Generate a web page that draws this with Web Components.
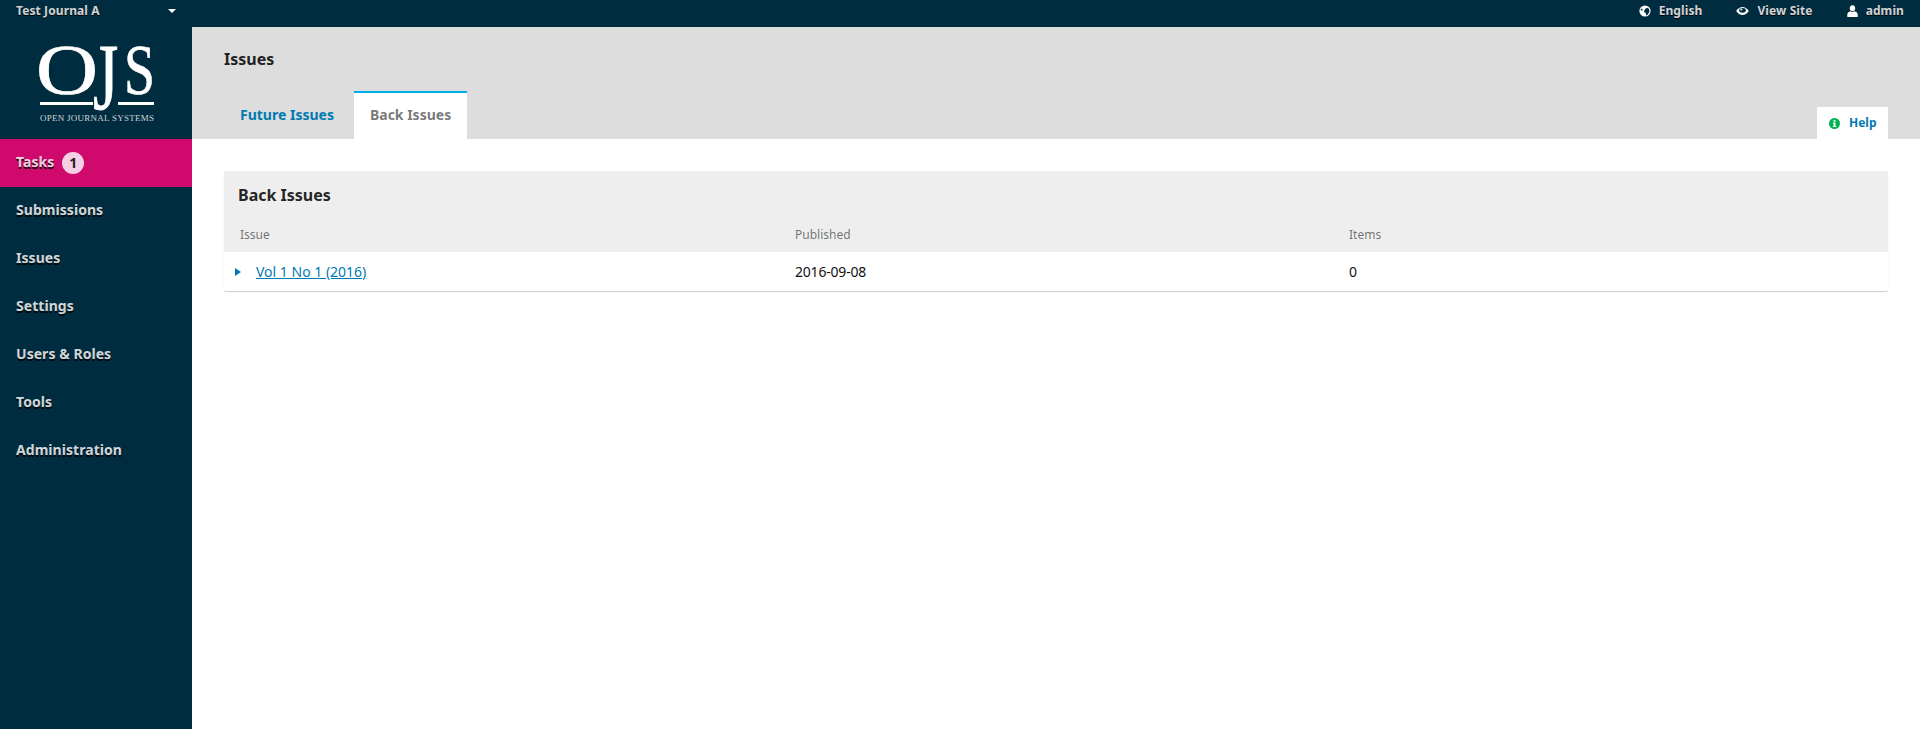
<!DOCTYPE html>
<html lang="en">
<head>
<meta charset="utf-8">
<title>Issues</title>
<style>
html, body { margin: 0; height: 100%; background: #fff; overflow: hidden; font-family: "Noto Sans", sans-serif; }
</style>
</head>
<body>
<ojs-app></ojs-app>
<template id="app-tpl">
<style>
:host { display: flex; flex-direction: column; height: 729px; }
.body { display: flex; flex: 1; min-height: 0; }
main { flex: 1; min-width: 0; }
</style>
<ojs-topbar></ojs-topbar>
<div class="body">
  <ojs-sidebar></ojs-sidebar>
  <main>
    <ojs-page-head></ojs-page-head>
    <ojs-issue-card></ojs-issue-card>
  </main>
</div>
</template>

<script>
const icons = {
  globe: `<svg width="12" height="12" viewBox="0 0 12 12"><circle cx="6" cy="6" r="5.6" fill="#fff"/><path d="M6.600 3.400 8.800 2.800 10.200 4.600 10.400 7 8.600 9.800 7.200 10.400 6.800 8 5 7 5.400 5.200Z" fill="#002c40"/><path d="M1.400 4.200 3 3.600 3.800 5 2.800 5.800Z" fill="#002c40"/></svg>`,
  eye: `<svg width="13" height="10" viewBox="0 0 13 10"><path d="M.2 5C2 2.200 4.200 1 6.500 1s4.500 1.200 6.300 4C11 7.800 8.800 9 6.500 9S2 7.800.2 5Z" fill="#fff"/><ellipse cx="6.500" cy="4.300" rx="3.400" ry="2.400" fill="#002c40"/><circle cx="5.300" cy="3.600" r="1" fill="#fff"/></svg>`,
  user: `<svg width="11" height="12" viewBox="0 0 11 12"><ellipse cx="5.500" cy="3.200" rx="2.700" ry="3" fill="#fff"/><path d="M.3 12V9.300C.3 7.700 2 6.800 3.500 6.300 4.800 7.200 6.200 7.200 7.500 6.300 9 6.800 10.700 7.700 10.700 9.300V12Z" fill="#fff"/></svg>`,
  info: `<svg width="11" height="11" viewBox="0 0 11 11"><circle cx="5.500" cy="5.500" r="5.500" fill="#00b24e"/><rect x="4.500" y="2" width="2" height="1.800" fill="#fff"/><path d="M3.900 4.500H6.500V8H7.300V9H3.900V8H4.600V5.500H3.900Z" fill="#fff"/></svg>`
}

class OjsApp extends HTMLElement {
  constructor() {
    super()
    this.attachShadow({ mode: "open" })
    this.shadowRoot.append(document.getElementById("app-tpl").content.cloneNode(true))
  }
}

class OjsTopbar extends HTMLElement {
  constructor() {
    super()
    this.attachShadow({ mode: "open" }).innerHTML = `
<style>
:host { display: flex; align-items: center; justify-content: space-between; height: 27px; background: #002c40; color: rgba(255,255,255,.84); font: 700 12px/20px "Noto Sans", sans-serif; letter-spacing: .1px; text-shadow: 0 1px 0 #000; padding: 0 16px; }
.journal { display: flex; align-items: center; width: 160px; justify-content: space-between; margin-top: -6px; }
.caret { width: 0; height: 0; border: 4px solid transparent; border-top: 4px solid #fff; border-bottom: 0; }
nav { display: flex; gap: 34px; margin-top: -5px; }
nav span { display: flex; align-items: center; gap: 8px; }
svg { display: block; }
</style>
<div class="journal"><span>Test Journal A</span><i class="caret"></i></div>
<nav>
  <span>${icons.globe}English</span>
  <span>${icons.eye}View Site</span>
  <span>${icons.user}admin</span>
</nav>`
  }
}

class OjsLogo extends HTMLElement {
  constructor() {
    super()
    this.attachShadow({ mode: "open" }).innerHTML = `
<style>
:host { display: block; height: 112px; }
svg { display: block; overflow: visible; }
text { font-family: "Liberation Serif", serif; fill: #fff; }
.big { stroke: #fff; stroke-width: .7px; }
</style>
<svg width="192" height="112" viewBox="0 0 192 112">
  <text class="big" x="36" y="67" font-size="72" textLength="62" lengthAdjust="spacingAndGlyphs">O</text>
  <text class="big" transform="translate(93 83) scale(.9 1.33)" font-size="72">J</text>
  <text class="big" x="124" y="67" font-size="72" textLength="31" lengthAdjust="spacingAndGlyphs">S</text>
  <rect x="40" y="75" width="53" height="3" fill="#fff"/>
  <rect x="118" y="75" width="36" height="3" fill="#fff"/>
  <text x="40" y="94" font-size="9" textLength="114" fill-opacity=".8">OPEN JOURNAL SYSTEMS</text>
</svg>`
  }
}

class OjsNavItem extends HTMLElement {
  constructor() {
    super()
    this.attachShadow({ mode: "open" }).innerHTML = `
<style>
:host { display: flex; align-items: center; gap: 8px; box-sizing: border-box; height: 48px; padding: 0 0 2px 16px; color: rgba(255,255,255,.84); font: 700 14px/20px "Noto Sans", sans-serif; letter-spacing: .05px; text-shadow: 0 2px 0 rgba(0,0,0,.8); }
:host([active]) { background: #d00a6c; }
.badge { display: none; width: 22px; height: 22px; margin-top: 2px; border-radius: 50%; background: #f5d0e5; color: #222; text-align: center; line-height: 22px; font-weight: 700; font-size: 14px; text-shadow: none; }
:host([badge]) .badge { display: block; }
</style>
<slot></slot><span class="badge">${this.getAttribute("badge") || ""}</span>`
  }
}

class OjsSidebar extends HTMLElement {
  constructor() {
    super()
    const items = ["Submissions", "Issues", "Settings", "Users &amp; Roles", "Tools", "Administration"]
    this.attachShadow({ mode: "open" }).innerHTML = `
<style>
:host { display: block; width: 192px; flex: none; background: #002c40; }
</style>
<ojs-logo></ojs-logo>
<ojs-nav-item active badge="1">Tasks</ojs-nav-item>
${items.map(i => `<ojs-nav-item>${i}</ojs-nav-item>`).join("")}`
  }
}

class OjsTab extends HTMLElement {
  constructor() {
    super()
    this.attachShadow({ mode: "open" }).innerHTML = `
<style>
:host { display: block; box-sizing: border-box; height: 48px; padding: 12px 16px 0; color: #007ab2; font: 700 14px/20px "Noto Sans", sans-serif; border-top: 2px solid transparent; }
:host([active]) { background: #fff; color: rgba(0,0,0,.54); border-top-color: #00b0ec; }
</style>
<slot></slot>`
  }
}

class OjsPageHead extends HTMLElement {
  constructor() {
    super()
    this.attachShadow({ mode: "open" }).innerHTML = `
<style>
:host { display: block; height: 112px; background: #ddd; padding: 0 32px; box-sizing: border-box; font-family: "Noto Sans", sans-serif; }
h1 { margin: 0; height: 64px; font: 700 16px/24px "Noto Sans", sans-serif; color: rgba(0,0,0,.87); padding-top: 20px; box-sizing: border-box; }
.row { display: flex; justify-content: space-between; align-items: flex-end; height: 48px; }
.tabs { display: flex; gap: 4px; }
.help { display: flex; align-items: center; gap: 9px; box-sizing: border-box; width: 71px; height: 32px; padding-left: 12px; background: #fff; color: #007ab2; font: 700 12px/20px "Noto Sans", sans-serif; }
svg { display: block; }
</style>
<h1>Issues</h1>
<div class="row">
  <div class="tabs">
    <ojs-tab>Future Issues</ojs-tab>
    <ojs-tab active>Back Issues</ojs-tab>
  </div>
  <div class="help">${icons.info}Help</div>
</div>`
  }
}

class OjsIssueCard extends HTMLElement {
  constructor() {
    super()
    this.attachShadow({ mode: "open" }).innerHTML = `
<style>
:host { display: block; margin: 32px 32px 0; border-radius: 2px; box-shadow: 0 1px 1px rgba(0,0,0,.2); font-family: "Noto Sans", sans-serif; color: rgba(0,0,0,.87); }
.head { background: #eee; height: 81px; box-sizing: border-box; padding: 12px 14px 0; border-radius: 2px 2px 0 0; }
h2 { margin: 0; font: 700 16px/24px "Noto Sans", sans-serif; }
.grid { display: grid; grid-template-columns: 555px 553px 1fr; }
.cols { margin: 19px 0 0 2px; font-size: 12px; line-height: 18px; color: rgba(0,0,0,.54); }
.row { height: 39px; align-items: center; padding-left: 16px; font-size: 14px; line-height: 20px; color: #111; }
.name { display: flex; align-items: center; gap: 15px; }
.name i { width: 0; height: 0; border: 4px solid transparent; border-left: 6px solid #007ab2; border-right: 0; margin-left: -5px; }
.date { letter-spacing: -.2px; }
.row > span:last-child { padding-left: 1px; }
.cols > span:last-child { padding-left: 1px; }
a { color: #007ab2; text-decoration: underline; }
</style>
<div class="head">
  <h2>Back Issues</h2>
  <div class="grid cols"><span>Issue</span><span>Published</span><span>Items</span></div>
</div>
<div class="grid row">
  <div class="name"><i></i><a>Vol 1 No 1 (2016)</a></div>
  <span class="date">2016-09-08</span>
  <span>0</span>
</div>`
  }
}

customElements.define("ojs-logo", OjsLogo)
customElements.define("ojs-nav-item", OjsNavItem)
customElements.define("ojs-sidebar", OjsSidebar)
customElements.define("ojs-topbar", OjsTopbar)
customElements.define("ojs-tab", OjsTab)
customElements.define("ojs-page-head", OjsPageHead)
customElements.define("ojs-issue-card", OjsIssueCard)
customElements.define("ojs-app", OjsApp)
</script>
</body>
</html>
